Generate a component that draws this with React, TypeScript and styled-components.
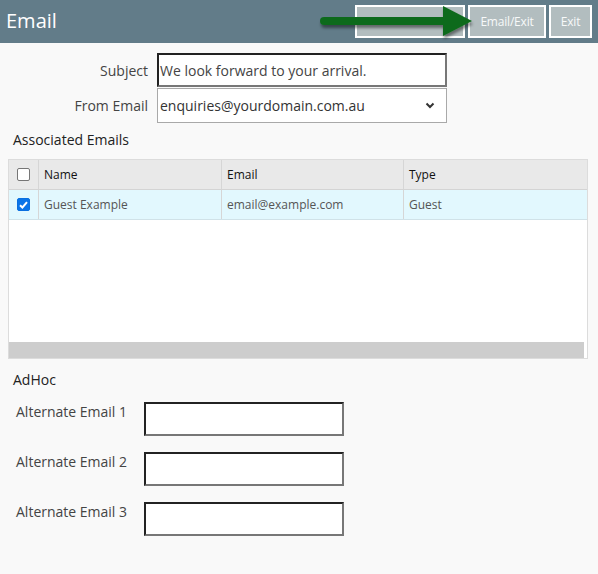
import React from "react";
import styled, { createGlobalStyle } from "styled-components";

const Global = createGlobalStyle`
  html, body { margin: 0; padding: 0; background: #f9f9f9; }
  body { font-family: "Open Sans", "Noto Sans", sans-serif; color: #333; }
  * { box-sizing: border-box; }
`;

const Page = styled.div`
  width: 598px;
  height: 574px;
  background: #f9f9f9;
  display: flex;
  flex-direction: column;
`;

const Header = styled.div`
  height: 43px;
  background: #627c89;
  display: flex;
  align-items: center;
  padding: 0 6px 0 6px;
  position: relative;
`;

const Title = styled.div`
  color: #fff;
  font-size: 20px;
  flex: 1;
  margin-top: -2px;
`;

const Buttons = styled.div`
  display: flex;
  gap: 3px;
  margin-top: -1px;
`;

const HeadButton = styled.div<{ $w: number }>`
  width: ${(p) => p.$w}px;
  height: 33px;
  border: 2px solid #fff;
  background: #b2bdbf;
  color: #f7f9f9;
  font-size: 12px;
  letter-spacing: -0.2px;
  display: flex;
  align-items: center;
  justify-content: center;
`;

const ArrowSvg = styled.svg`
  position: absolute;
  left: 312px;
  top: 2px;
  overflow: visible;
`;

const Form = styled.div`
  display: grid;
  grid-template-columns: 148px 290px;
  column-gap: 9px;
  row-gap: 1px;
  padding: 10px 0 0 0;
  align-items: center;
`;

const Label = styled.div`
  text-align: right;
  font-size: 14px;
  color: #444;
`;

const TextBox = styled.div`
  height: 34px;
  background: #fff;
  border: 2px solid;
  border-color: #222 #777 #777 #222;
  font-size: 14px;
  color: #444;
  padding: 0 1px;
  display: flex;
  align-items: center;
`;

const SelectBox = styled.div`
  height: 35px;
  background: #fff;
  border: 1px solid #a9a9a9;
  font-size: 14px;
  color: #333;
  padding: 0 11px 0 2px;
  display: flex;
  align-items: center;
  justify-content: space-between;
`;

const Section = styled.div`
  font-size: 14px;
  color: #222;
  padding-left: 13px;
  margin-top: 7px;
`;

const TableWrap = styled.div`
  margin: 10px 10px 0 8px;
  height: 200px;
  border: 1px solid #dcdcdc;
  background: #fff;
  display: flex;
  flex-direction: column;
`;

const Row = styled.div<{ $head?: boolean }>`
  display: grid;
  grid-template-columns: 30px 183px 182px 1fr;
  height: 30px;
  background: ${(p) => (p.$head ? "#e9e9e9" : "#e2f8fe")};
  border-bottom: 1px solid ${(p) => (p.$head ? "#d4d4d4" : "#d0e2e8")};
  font-size: 12px;
  color: ${(p) => (p.$head ? "#111" : "#555")};
`;

const Cell = styled.div<{ $center?: boolean }>`
  display: flex;
  align-items: center;
  justify-content: ${(p) => (p.$center ? "center" : "flex-start")};
  padding-left: ${(p) => (p.$center ? 0 : 5)}px;
  border-right: 1px solid #d6d6d6;
  &:last-child { border-right: none; }
`;

const Check = styled.div<{ $on?: boolean }>`
  width: 13px;
  height: 13px;
  border-radius: 2px;
  border: 1px solid ${(p) => (p.$on ? "#0a6fe0" : "#767676")};
  background: ${(p) => (p.$on ? "#0b74e8" : "#fff")};
  display: flex;
  align-items: center;
  justify-content: center;
`;

const Spacer = styled.div`
  flex: 1;
`;

const Scrollbar = styled.div`
  height: 16px;
  background: #cdcdcd;
  margin-right: 3px;
`;

const AdHoc = styled.div`
  font-size: 14px;
  color: #222;
  padding: 11px 0 0 13px;
`;

const AltGrid = styled.div`
  display: grid;
  grid-template-columns: 128px 200px;
  row-gap: 16px;
  padding: 13px 0 0 16px;
`;

const AltLabel = styled.div`
  font-size: 14px;
  color: #444;
`;

const AltBox = styled.div`
  height: 34px;
  background: #fff;
  border: 2px solid;
  border-color: #222 #777 #777 #222;
`;

export default function App() {
  return (
    <Page>
      <Global />
      <Header>
        <Title>Email</Title>
        <Buttons>
          <HeadButton $w={110} />
          <HeadButton $w={78}>Email/Exit</HeadButton>
          <HeadButton $w={43}>Exit</HeadButton>
        </Buttons>
        <ArrowSvg width="160" height="40" viewBox="0 0 160 40">
          <defs>
            <filter id="sh" x="-10%" y="-30%" width="120%" height="180%">
              <feDropShadow dx="1" dy="3" stdDeviation="1.5" floodColor="#000" floodOpacity="0.45" />
            </filter>
          </defs>
          <g filter="url(#sh)">
            <line x1="12" y1="19" x2="136" y2="19" stroke="#0e6b1d" strokeWidth="8" strokeLinecap="round" />
            <polygon points="131,4 160,19 131,34" fill="#0e6b1d" />
          </g>
        </ArrowSvg>
      </Header>
      <Form>
        <Label>Subject</Label>
        <TextBox>We look forward to your arrival.</TextBox>
        <Label>From Email</Label>
        <SelectBox>
          <span>enquiries@yourdomain.com.au</span>
          <svg width="10" height="7" viewBox="0 0 10 7">
            <path d="M1.5 1.5 L5 5 L8.5 1.5" stroke="#333" strokeWidth="2" fill="none" />
          </svg>
        </SelectBox>
      </Form>
      <Section>Associated Emails</Section>
      <TableWrap>
        <Row $head>
          <Cell $center>
            <Check />
          </Cell>
          <Cell>Name</Cell>
          <Cell>Email</Cell>
          <Cell>Type</Cell>
        </Row>
        <Row>
          <Cell $center>
            <Check $on>
              <svg width="9" height="8" viewBox="0 0 9 8">
                <path d="M1 4.2 L3.4 6.5 L8 1.2" stroke="#fff" strokeWidth="2" fill="none" />
              </svg>
            </Check>
          </Cell>
          <Cell>Guest Example</Cell>
          <Cell>email@example.com</Cell>
          <Cell>Guest</Cell>
        </Row>
        <Spacer />
        <Scrollbar />
      </TableWrap>
      <AdHoc>AdHoc</AdHoc>
      <AltGrid>
        <AltLabel>Alternate Email 1</AltLabel>
        <AltBox />
        <AltLabel>Alternate Email 2</AltLabel>
        <AltBox />
        <AltLabel>Alternate Email 3</AltLabel>
        <AltBox />
      </AltGrid>
    </Page>
  );
}
